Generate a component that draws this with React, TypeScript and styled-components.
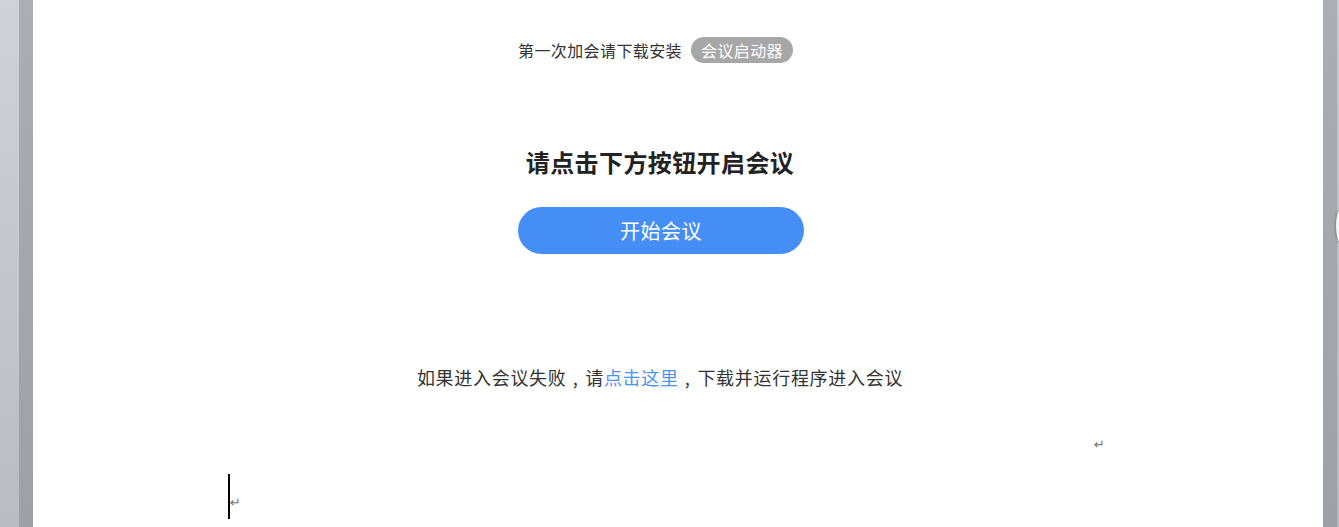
import React from 'react';
import styled, { createGlobalStyle } from 'styled-components';

const cjk = `"Noto Sans CJK SC", "Noto Sans", sans-serif`;

const GlobalStyles = createGlobalStyle`
  html, body {
    margin: 0;
    padding: 0;
    height: 100%;
    overflow: hidden;
  }
  body {
    font-family: ${cjk};
    background: #ffffff;
  }
  #root {
    height: 100%;
  }
`;

const Viewport = styled('div')`
  display: flex;
  height: 527px;
  width: 1339px;
`;

const Gutter = styled('div')`
  width: 19px;
  background: linear-gradient(to bottom, #cfd2d6, #b9bcc0);
`;

const Shadow = styled('div')<{ $w: number }>`
  width: ${(p) => p.$w}px;
  background: linear-gradient(to bottom, #abaeb2, #9da0a4);
  position: relative;
`;

const Edge = styled('div')`
  width: 2px;
  background: linear-gradient(to bottom, #c8cbcf, #b4b7bb);
  position: relative;
`;

const Knob = styled('div')`
  position: absolute;
  left: -1px;
  top: 210px;
  width: 8px;
  height: 32px;
  border-radius: 50%;
  background: #f4f4f4;
  box-shadow: 0 0 3px rgba(0, 0, 0, 0.45);
`;

const Page = styled('div')`
  flex: 1;
  background: #ffffff;
  display: flex;
  flex-direction: column;
  padding-right: 36px;
`;

const Center = styled('div')`
  display: flex;
  flex-direction: column;
  align-items: center;
`;

const TopRow = styled('div')`
  display: flex;
  align-items: center;
  gap: 9px;
  margin-top: 37px;
  margin-right: 9px;
  height: 26px;
`;

const Hint = styled('span')`
  font-size: 16px;
  color: #333333;
  letter-spacing: 0.4px;
`;

const Badge = styled('span')`
  background: #a7a7a7;
  color: #ffffff;
  font-size: 16px;
  height: 26px;
  line-height: 26px;
  padding: 0 10px;
  border-radius: 13px;
  letter-spacing: 0.4px;
`;

const Heading = styled('h1')`
  margin: 86px 0 0;
  font-size: 24px;
  line-height: 26px;
  font-weight: 700;
  color: #222222;
  letter-spacing: 0.4px;
`;

const StartButton = styled('button')`
  margin: 32px 0 0 2px;
  width: 286px;
  height: 47px;
  border: none;
  border-radius: 24px;
  background: #448ef6;
  color: #ffffff;
  font-family: ${cjk};
  font-size: 20px;
  letter-spacing: 0.5px;
  cursor: pointer;
`;

const Fallback = styled('p')`
  margin: 111px 0 0;
  font-size: 18px;
  line-height: 24px;
  color: #333333;
  letter-spacing: 0.7px;
`;

const Punct = styled('span')`
  display: inline-block;
  width: 18px;
  text-align: center;
  margin-right: 0.7px;
`;

const Link = styled('a')`
  color: #4a94f8;
  text-decoration: none;
`;

const MarkRow = styled('div')`
  display: flex;
  justify-content: flex-end;
  padding-right: 182px;
  margin-top: 49px;
  height: 14px;
`;

const ReturnMark = styled('span')`
  font-size: 13px;
  line-height: 14px;
  color: #6f6f6f;
  font-family: "DejaVu Sans", sans-serif;
`;

const CursorRow = styled('div')`
  display: flex;
  align-items: center;
  padding-left: 195px;
  margin-top: 22px;
`;

const Caret = styled('div')`
  width: 2px;
  height: 45px;
  background: #000000;
`;

const CaretMark = styled(ReturnMark)`
  margin-top: 12px;
`;

export default function App() {
  return (
    <>
      <GlobalStyles />
      <Viewport>
        <Gutter />
        <Shadow $w={14} />
        <Page>
          <Center>
            <TopRow>
              <Hint>第一次加会请下载安装</Hint>
              <Badge>会议启动器</Badge>
            </TopRow>
            <Heading>请点击下方按钮开启会议</Heading>
            <StartButton>开始会议</StartButton>
            <Fallback>
              如果进入会议失败<Punct>,</Punct>请<Link href="#">点击这里</Link>
              <Punct>,</Punct>下载并运行程序进入会议
            </Fallback>
          </Center>
          <MarkRow>
            <ReturnMark>↵</ReturnMark>
          </MarkRow>
          <CursorRow>
            <Caret />
            <CaretMark>↵</CaretMark>
          </CursorRow>
        </Page>
        <Shadow $w={14} />
        <Edge>
          <Knob />
        </Edge>
      </Viewport>
    </>
  );
}
